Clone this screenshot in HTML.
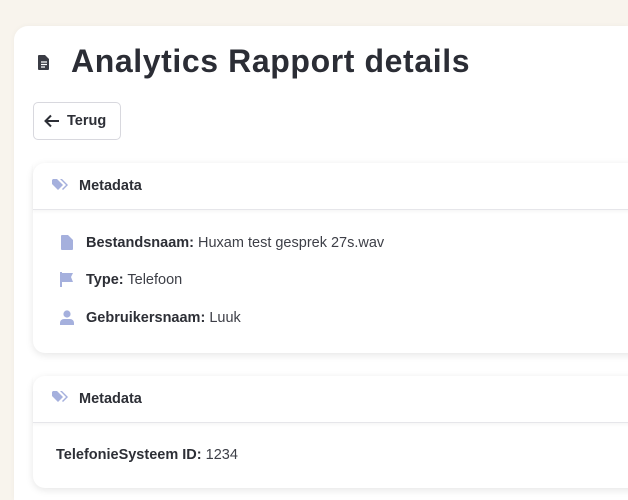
<!DOCTYPE html>
<html style="overflow:hidden;height:500px"><head><meta charset="utf-8"><style>
*{box-sizing:border-box;margin:0;padding:0}
body{width:628px;height:500px;overflow:hidden;background:#f8f4ed;font-family:"Liberation Sans",sans-serif;color:#2d2f36;position:relative}
.main{position:absolute;left:14px;top:26px;width:614px;height:474px;background:#fff;border-radius:14px 0 0 0;box-shadow:0 0 6px rgba(0,0,0,.04)}
h1{position:absolute;left:71px;top:43px;font-size:32px;font-weight:bold;letter-spacing:0.6px;color:#2b2d35;white-space:nowrap}
.btn{position:absolute;left:33px;top:102px;width:88px;height:38px;border:1px solid #d8d8de;border-radius:5px;background:#fff;font-size:14.5px;font-weight:bold;line-height:37px;padding-left:33px;color:#2d2f36}
.card{position:absolute;left:33px;width:640px;background:#fff;border-radius:12px;box-shadow:0 2px 8px rgba(0,0,0,.1)}
.hd{height:47px;border-bottom:1px solid #e6e6ea;box-shadow:0 2px 3px rgba(0,0,0,.04);font-weight:bold;font-size:14.5px;line-height:47px;padding-left:46px;position:relative}
.row{position:absolute;left:53px;font-size:14.5px;white-space:nowrap}
.row b{color:#2d2f36}
.row span{color:#3d3f47}
svg{position:absolute}
</style></head><body>
<div class="main"></div>
<svg style="left:38px;top:55px" width="12" height="15" viewBox="0 0 12 15"><path d="M1 0h6l4 4v10a1 1 0 0 1-1 1H1a1 1 0 0 1-1-1V1a1 1 0 0 1 1-1z" fill="#3a3c44"/><path d="M3 7h6M3 9.5h6M3 12h4" stroke="#fff" stroke-width="1.2"/></svg>
<h1>Analytics Rapport details</h1>
<div class="btn">Terug</div>
<svg style="left:44px;top:114px" width="16" height="14" viewBox="0 0 16 14"><path d="M15 7H2M7 1.5L1.5 7 7 12.5" stroke="#2d2f36" stroke-width="2" fill="none"/></svg>
<div class="card" style="top:163px;height:190px"><div class="hd">Metadata</div>
<div class="row" style="top:72px"><b>Bestandsnaam:</b> <span>Huxam test gesprek 27s.wav</span></div>
<div class="row" style="top:109px"><b>Type:</b> <span>Telefoon</span></div>
<div class="row" style="top:147px"><b>Gebruikersnaam:</b> <span>Luuk</span></div>
</div>
<div class="card" style="top:376px;height:112px"><div class="hd">Metadata</div>
<div class="row" style="left:23px;top:71px"><b>TelefonieSysteem ID:</b> <span>1234</span></div>
</div>
<svg style="left:52px;top:179px" width="17" height="13" viewBox="0 0 17 13"><path d="M0 1v4l6 6 5-5-6-6H1z" fill="#a5b0dd"/><path d="M8 0h2l6 6-5 5-1-1 4-4z" fill="#a5b0dd"/></svg>
<svg style="left:52px;top:391px" width="17" height="13" viewBox="0 0 17 13"><path d="M0 1v4l6 6 5-5-6-6H1z" fill="#a5b0dd"/><path d="M8 0h2l6 6-5 5-1-1 4-4z" fill="#a5b0dd"/></svg>
<svg style="left:61px;top:235px" width="12" height="15" viewBox="0 0 12 15"><path d="M1 0h6l5 5v9a1 1 0 0 1-1 1H1a1 1 0 0 1-1-1V1a1 1 0 0 1 1-1z" fill="#a5b0dd"/></svg>
<svg style="left:59px;top:272px" width="15" height="15" viewBox="0 0 15 15"><path d="M1 0h2v15H1z M3 1h11l-2 4 2 5H3z" fill="#a5b0dd"/></svg>
<svg style="left:60px;top:310px" width="14" height="15" viewBox="0 0 14 15"><circle cx="7" cy="4" r="3.6" fill="#a5b0dd"/><path d="M0 15v-2a4 4 0 0 1 4-4h6a4 4 0 0 1 4 4v2z" fill="#a5b0dd"/></svg>
</body></html>
